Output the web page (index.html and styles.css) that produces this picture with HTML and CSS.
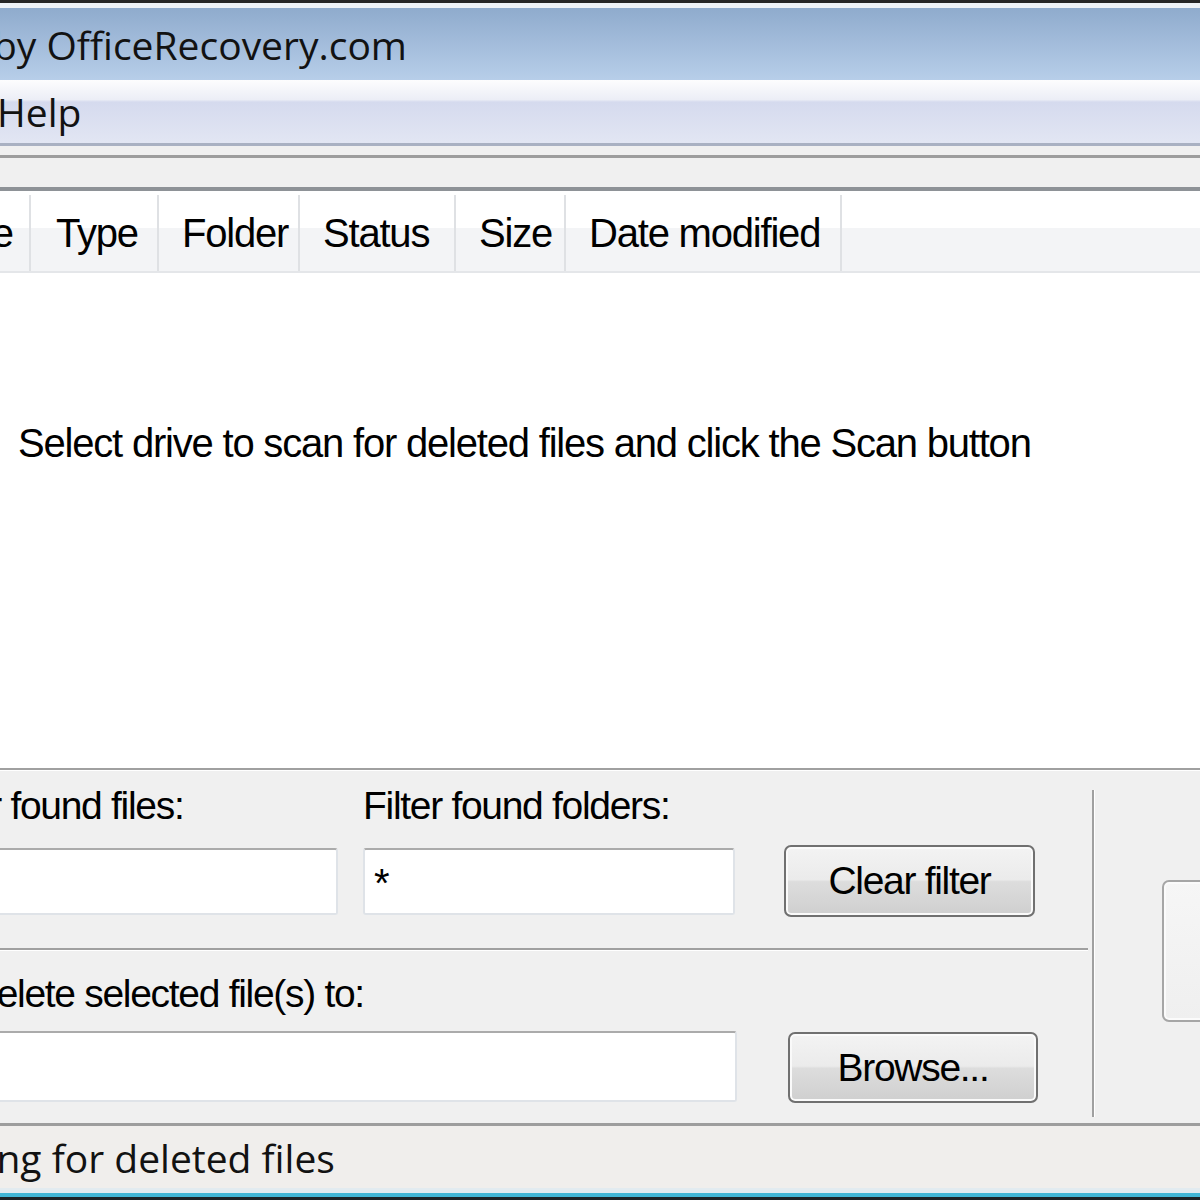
FILE: index.html
```html
<!DOCTYPE html>
<html lang="en">
<head>
<meta charset="utf-8">
<title>Undelete by OfficeRecovery.com</title>
<link rel="stylesheet" href="styles.css">
</head>
<body>
<div class="window">
  <div class="edge-top"></div>
  <div class="titlebar"><span class="title">by OfficeRecovery.com</span></div>
  <div class="menubar"><span class="menu-item">Help</span></div>
  <div class="toolbar"></div>
  <div class="listview">
    <div class="header">
      <div class="col c-name"><span class="cut">Name</span></div>
      <div class="col c-type">Type</div>
      <div class="col c-folder">Folder</div>
      <div class="col c-status">Status</div>
      <div class="col c-size">Size</div>
      <div class="col c-date">Date modified</div>
      <div class="col-fill"></div>
    </div>
    <div class="list-body">
      <p class="empty">Select drive to scan for deleted files and click the Scan button</p>
    </div>
  </div>
  <div class="panel">
    <div class="panel-main">
      <div class="filter-row">
        <div class="field f-files">
          <label class="lbl">Filter found files:</label>
          <div class="input"></div>
        </div>
        <div class="field f-folders">
          <label class="lbl">Filter found folders:</label>
          <div class="input">*</div>
        </div>
        <button class="btn btn-clear">Clear filter</button>
      </div>
      <div class="sep"></div>
      <div class="dest">
        <label class="lbl dest-lbl">Undelete selected file(s) to:</label>
        <div class="dest-row">
          <div class="input dest-input"></div>
          <button class="btn btn-browse">Browse...</button>
        </div>
      </div>
    </div>
    <div class="vsep"></div>
    <div class="side">
      <div class="big-btn"></div>
    </div>
  </div>
  <div class="statusbar"><span class="status-text">Scanning for deleted files</span></div>
  <div class="edge-bottom"></div>
</div>
</body>
</html>
```
FILE: styles.css
```css
* { box-sizing: border-box; }
html, body {
  margin: 0;
  padding: 0;
}
body {
  width: 1200px;
  height: 1200px;
  overflow: hidden;
  background: #f0f0f0;
  font-family: "Liberation Sans", Arial, sans-serif;
  color: #000;
}
.window {
  width: 1200px;
  height: 1200px;
  overflow: hidden;
  display: flex;
  flex-direction: column;
}
.edge-top {
  height: 3px;
  background: #262626;
  flex: none;
}
.titlebar {
  flex: none;
  height: 77px;
  border-top: 5px solid #eef2f7;
  background: linear-gradient(#8fabcd, #b7cee9);
  display: flex;
  align-items: center;
  white-space: nowrap;
}
.title {
  font-family: "Open Sans", "Noto Sans", sans-serif;
  font-size: 39px;
  color: #121212;
  margin-left: -7px;
}
.menubar {
  flex: none;
  height: 66px;
  background: linear-gradient(#fdfdfe 0%, #eceef6 31%, #d5daee 35%, #e2e6f3 100%);
  border-bottom: 3px solid #a9b1c2;
  display: flex;
  align-items: center;
}
.menu-item {
  font-family: "Open Sans", "Noto Sans", sans-serif;
  font-size: 39px;
  color: #121212;
  margin-left: -3px;
}
.toolbar {
  flex: none;
  margin-top: 9px;
  height: 32px;
  border-top: 3px solid #9d9d9d;
  background: #f0f0f0;
}
.listview {
  flex: none;
  border-top: 4px solid #8e9297;
  background: #fff;
}
.header {
  display: flex;
  height: 82px;
  padding-top: 4px;
  background: linear-gradient(#ffffff 0%, #ffffff 46%, #f3f4f6 46%, #f3f4f6 100%);
  border-bottom: 2px solid #e4e6e9;
  white-space: nowrap;
}
.col {
  flex: none;
  display: flex;
  align-items: center;
  padding-left: 23px;
  border-right: 2px solid #dfe1e4;
  font-size: 40px;
  letter-spacing: -1.2px;
}
.c-name { width: 31px; padding-left: 0; }
.c-name .cut { margin-left: -89px; }
.c-type { width: 128px; padding-left: 25px; }
.c-folder { width: 141px; }
.c-status { width: 156px; }
.c-size { width: 110px; }
.c-date { width: 276px; }
.col-fill { flex: 1; }
.list-body {
  height: 495px;
  padding: 150px 0 0 18px;
}
.empty {
  margin: 0;
  font-size: 40px;
  line-height: 40px;
  letter-spacing: -1.2px;
  white-space: nowrap;
}
.panel {
  flex: none;
  height: 355px;
  display: flex;
  border-top: 2px solid #a0a0a0;
  box-shadow: inset 0 1px #ffffff;
}
.panel-main {
  flex: none;
  width: 1088px;
  display: flex;
  flex-direction: column;
}
.lbl {
  display: block;
  font-size: 39px;
  line-height: 40px;
  letter-spacing: -1.3px;
  white-space: nowrap;
}
.filter-row {
  display: flex;
  align-items: flex-end;
  padding-top: 16px;
}
.field {
  flex: none;
  display: flex;
  flex-direction: column;
}
.f-files {
  width: 416px;
  margin-left: -78px;
}
.f-folders {
  width: 372px;
  margin-left: 25px;
}
.input {
  margin-top: 22px;
  height: 67px;
  background: #fff;
  border: 2px solid #dfe3e8;
  border-top-color: #ababab;
  border-radius: 3px;
  padding: 13px 0 0 9px;
  font-size: 40px;
  line-height: 40px;
}
.btn {
  flex: none;
  font-family: "Liberation Sans", Arial, sans-serif;
  font-size: 39px;
  letter-spacing: -1.3px;
  color: #000;
  border: 2px solid #707070;
  border-radius: 7px;
  background: linear-gradient(#f3f3f3 0%, #ebebeb 48%, #dddddd 51%, #cfcfcf 100%);
  box-shadow: inset 0 0 0 2px #fafafa;
  padding: 0;
}
.btn-clear {
  width: 251px;
  height: 72px;
  margin-left: 49px;
  margin-bottom: -2px;
}
.sep {
  margin-top: 33px;
  height: 3px;
  border-top: 2px solid #a0a0a0;
  border-bottom: 1px solid #ffffff;
}
.dest {
  padding-top: 23px;
}
.dest-lbl {
  margin-left: -71px;
}
.dest-row {
  display: flex;
  align-items: flex-start;
  margin-top: 17px;
}
.dest-input {
  flex: none;
  margin-top: 0;
  width: 814px;
  height: 71px;
  margin-left: -77px;
}
.btn-browse {
  width: 250px;
  height: 71px;
  margin-left: 51px;
  margin-top: 1px;
}
.vsep {
  flex: none;
  width: 3px;
  border-left: 2px solid #a0a0a0;
  border-right: 1px solid #ffffff;
  margin: 20px 0 6px 4px;
}
.side {
  flex: none;
  padding: 110px 0 0 67px;
}
.big-btn {
  width: 100px;
  height: 142px;
  border: 2px solid #a6a6a6;
  border-radius: 7px;
  background: linear-gradient(#f6f6f6, #efefef);
  box-shadow: inset 0 0 0 2px #fbfbfb;
}
.statusbar {
  flex: none;
  height: 65px;
  border-top: 3px solid #9d9d9d;
  background: #f0eeec;
  display: flex;
  align-items: center;
  white-space: nowrap;
}
.status-text {
  font-family: "Open Sans", "Noto Sans", sans-serif;
  font-size: 39px;
  color: #121212;
  margin-left: -123px;
}
.edge-bottom {
  flex: none;
  height: 12px;
  background: linear-gradient(#e2ebf0 0, #e2ebf0 5px, #41b6d6 5px, #41b6d6 9px, #1d2226 9px);
}
```
